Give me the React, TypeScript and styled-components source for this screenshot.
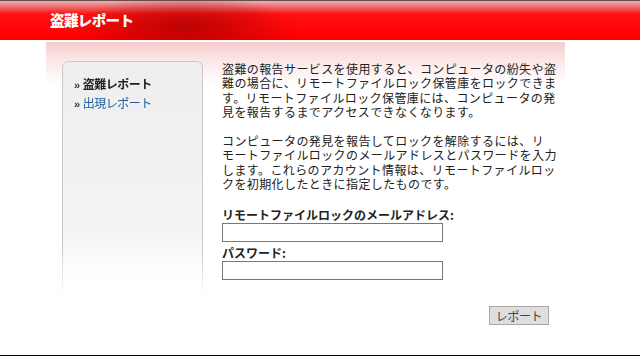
import React, { useState } from 'react';
import styled, { createGlobalStyle } from 'styled-components';

const GlobalStyle = createGlobalStyle`
  html, body {
    margin: 0;
    padding: 0;
    background: #fff;
  }
  body {
    font-family: "Noto Sans CJK JP", "Noto Sans", sans-serif;
    font-size: 12px;
    color: #222;
  }
`;

const Page = styled.div`
  height: 356px;
  box-sizing: border-box;
  border-bottom: 1px solid #000;
  overflow: hidden;
`;

const Banner = styled.header`
  height: 40px;
  box-sizing: border-box;
  border-top: 1px solid #6a4a4a;
  padding-left: 50px;
  display: flex;
  align-items: center;
  background:
    radial-gradient(ellipse 110px 34px at 185px 26px, rgba(140, 0, 0, 0.6), rgba(140, 0, 0, 0) 100%),
    linear-gradient(to bottom, #e9b4b4 0px, #f06a6a 6px, #ff1010 13px, #ff0000 36px, #e80000 40px);
`;

const Title = styled.h1`
  margin: 0 0 2px;
  font-size: 14.5px;
  font-weight: 900;
  color: #fff;
  letter-spacing: -0.6px;
`;

const Panel = styled.div`
  margin: 2px 0 0 46px;
  width: 519px;
  padding: 19px 0 0 16px;
  box-sizing: border-box;
  display: flex;
  gap: 19px;
  background: linear-gradient(to bottom, #f7cccc 0px, #fbe6e6 18px, #fff 42px);
`;

const Sidebar = styled.nav`
  width: 141px;
  height: 232px;
  box-sizing: border-box;
  border: 1px solid #c8c8c8;
  border-bottom: none;
  border-radius: 6px 6px 0 0;
  padding: 15px 0 0 11px;
  display: flex;
  flex-direction: column;
  gap: 4px;
  background: linear-gradient(to bottom, #eeeeee 0%, #f3f3f3 70%, #fcfcfc 92%, #fff 100%);
  -webkit-mask-image: linear-gradient(to bottom, #000 80%, rgba(0, 0, 0, 0.1) 100%);
  mask-image: linear-gradient(to bottom, #000 80%, rgba(0, 0, 0, 0.1) 100%);
`;

const NavLink = styled.a<{ $active?: boolean }>`
  display: flex;
  align-items: baseline;
  line-height: 14px;
  font-size: 12px;
  letter-spacing: -0.5px;
  text-decoration: none;
  cursor: pointer;
  color: ${(p) => (p.$active ? '#222' : '#1f5fa0')};
  font-weight: ${(p) => (p.$active ? 'bold' : 'normal')};
  &::before {
    content: '»';
    font-family: "Liberation Sans", sans-serif;
    font-weight: bold;
    font-size: 11px;
    color: #333;
    margin-right: 3px;
  }
`;

const Content = styled.main`
  width: 340px;
  padding-top: 1px;
  display: flex;
  flex-direction: column;
`;

const Text = styled.p`
  margin: 0 0 14.4px;
  font-size: 12px;
  line-height: 14.4px;
  letter-spacing: 0.4px;
  white-space: nowrap;
  color: #222;
`;

const Line = styled.span`
  display: block;
`;

const Form = styled.form`
  margin-top: 2px;
  display: flex;
  flex-direction: column;
`;

const Label = styled.label`
  font-size: 12px;
  font-weight: bold;
  line-height: 14px;
  color: #222;
`;

const Field = styled.input`
  width: 221px;
  height: 19px;
  box-sizing: border-box;
  margin: 1px 0 4px;
  border: 1px solid #777;
  padding: 1px 3px;
  font-size: 12px;
  &:focus {
    outline: none;
  }
`;

const Actions = styled.div`
  width: 327px;
  display: flex;
  justify-content: flex-end;
  margin-top: 22px;
`;

const Button = styled.button`
  width: 60px;
  height: 19px;
  padding: 0;
  border: 1px solid #a8a8a8;
  background: #dedede;
  color: #444;
  font-family: inherit;
  font-size: 12px;
  letter-spacing: -0.4px;
  line-height: 16px;
  cursor: pointer;
`;

const paragraphs = [
  [
    '盗難の報告サービスを使用すると、コンピュータの紛失や盗',
    '難の場合に、リモートファイルロック保管庫をロックできま',
    'す。リモートファイルロック保管庫には、コンピュータの発',
    '見を報告するまでアクセスできなくなります。',
  ],
  [
    'コンピュータの発見を報告してロックを解除するには、リ',
    'モートファイルロックのメールアドレスとパスワードを入力',
    'します。これらのアカウント情報は、リモートファイルロッ',
    'クを初期化したときに指定したものです。',
  ],
];

const App: React.FC = () => {
  const [email, setEmail] = useState('');
  const [password, setPassword] = useState('');

  return (
    <Page>
      <GlobalStyle />
      <Banner>
        <Title>盗難レポート</Title>
      </Banner>
      <Panel>
        <Sidebar>
          <NavLink $active>盗難レポート</NavLink>
          <NavLink>出現レポート</NavLink>
        </Sidebar>
        <Content>
          {paragraphs.map((lines, i) => (
            <Text key={i}>
              {lines.map((line) => (
                <Line key={line}>{line}</Line>
              ))}
            </Text>
          ))}
          <Form onSubmit={(e) => e.preventDefault()}>
            <Label htmlFor="mail">リモートファイルロックのメールアドレス:</Label>
            <Field id="mail" type="text" value={email} onChange={(e) => setEmail(e.target.value)} />
            <Label htmlFor="pass">パスワード:</Label>
            <Field id="pass" type="password" value={password} onChange={(e) => setPassword(e.target.value)} />
            <Actions>
              <Button type="submit">レポート</Button>
            </Actions>
          </Form>
        </Content>
      </Panel>
    </Page>
  );
};

export default App;
